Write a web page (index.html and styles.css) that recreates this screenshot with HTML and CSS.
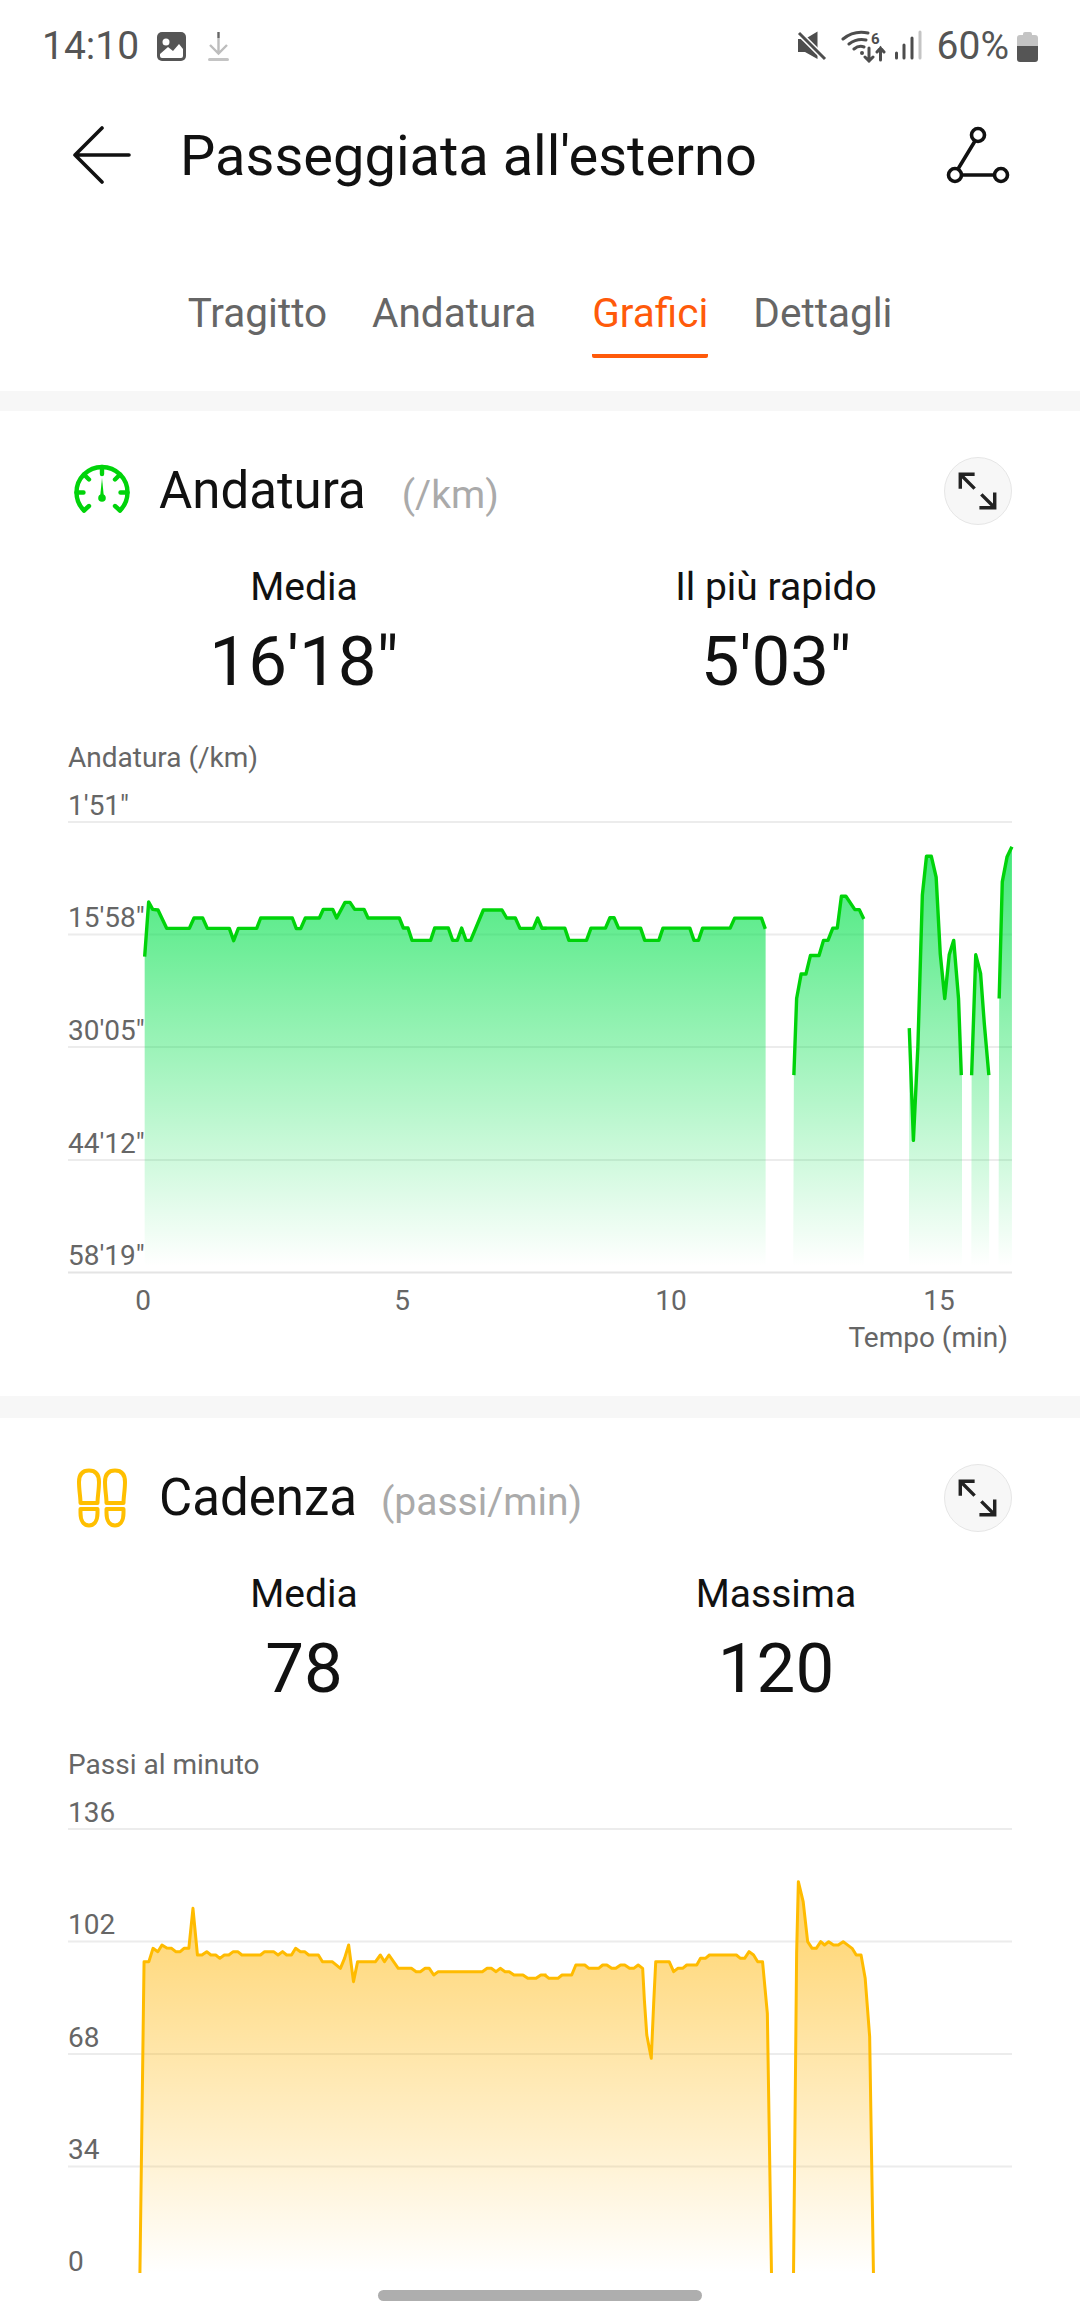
FILE: index.html
```html
<!DOCTYPE html>
<html lang="it">
<head>
<meta charset="utf-8">
<title>Passeggiata all'esterno</title>
<link rel="stylesheet" href="styles.css">
</head>
<body>
<div class="screen">
  <div class="status">
    <div class="status-side">
      <span class="status-text">14:10</span>
      <svg class="ic-pic" viewBox="0 0 29 29"><rect width="29" height="29" rx="5" fill="#555"/><circle cx="9" cy="10" r="3.5" fill="#fff"/><path d="M3 22 11 15l5 4 6-7 4 5v7q0 2-2 2H5q-2 0-2-2Z" fill="#fff"/></svg>
      <svg class="ic-dl" viewBox="0 0 21 29"><path d="M10.5 6V21M2 13l8.5 8.5L19 13" fill="none" stroke="#bdbdbd" stroke-width="2.4"/><path d="M10.5 0V6" stroke="#666" stroke-width="2.4"/><rect y="26" width="21" height="3" rx="1.5" fill="#c4c4c4"/></svg>
    </div>
    <div class="status-side">
      <svg class="ic-sys" viewBox="0 0 125 34">
        <path d="M1 10H8L20.5 2.5V30L8 23H1Z" fill="#4d4d4d"/>
        <path d="M2 4 28 30" stroke="#fff" stroke-width="6"/>
        <path d="M2 4 28 30" stroke="#4d4d4d" stroke-width="3"/>
        <g fill="none" stroke="#4d4d4d" stroke-width="3" stroke-linecap="round">
          <path d="M46 10Q57 1 71 4M52 15Q60 9 69 11M57 20Q62 16 67 18"/>
          <path d="M72 19V32M68 28l4 4 4-4M83.5 31V19M80 23l3.500-4 3.500 4"/>
          <path d="M99.500 24V29M107 16V29M115 9V29"/>
          <path d="M123 3V29" stroke="#c4c4c4"/>
        </g>
        <circle cx="65" cy="24" r="2" fill="#4d4d4d"/>
        <text class="wifi-six" x="74" y="15">6</text>
      </svg>
      <span class="status-text status-pct">60%</span>
      <svg class="ic-bat" viewBox="0 0 21 31"><path d="M6 3q0-2 2-2h5q2 0 2 2v1h3q3 0 3 3v8H0V7q0-3 3-3h3Z" fill="#c4c4c4"/><path d="M0 15h21v13q0 3-3 3H3q-3 0-3-3Z" fill="#555"/></svg>
    </div>
  </div>

  <header class="appbar">
    <svg class="ic-back" viewBox="0 0 60 60"><path d="M30 2 3 29 30 56M3 29H57" fill="none" stroke="#111" stroke-width="3.600" stroke-linecap="round" stroke-linejoin="round"/></svg>
    <h1 class="page-title">Passeggiata all'esterno</h1>
    <svg class="ic-route" viewBox="0 0 64 60"><g fill="none" stroke="#111" stroke-width="3.600"><circle cx="32" cy="9" r="6.500"/><circle cx="9" cy="49" r="6.500"/><circle cx="55" cy="49" r="6.500"/><path d="M29 15 12 43M16 49H48"/></g></svg>
  </header>

  <nav class="tabs">
    <span class="tab">Tragitto</span>
    <span class="tab">Andatura</span>
    <span class="tab tab-active">Grafici</span>
    <span class="tab">Dettagli</span>
  </nav>

  <div class="band"></div>

  <section class="card">
    <div class="card-head">
      <svg class="ic-head" viewBox="0 0 60 60"><g fill="none" stroke="#00d30a" stroke-width="4.400" stroke-linecap="round"><path d="M12 49.500A25.500 25.500 0 1 1 48 49.500"/><path d="M30 6V13M12 13.500 17 18.500M48 13.500 43 18.500M4.500 31.500H11.500M48.500 31.500H55.500M12 49.500 17 45M48 49.500 43 45"/></g><path d="M30 17 31.800 35H28.200Z" fill="#00d30a"/><circle cx="30" cy="37" r="3.800" fill="#00d30a"/></svg>
      <div class="head-text">
        <span class="head-title">Andatura</span>
        <span class="head-unit unit-wide">(/km)</span>
      </div>
      <button class="expand" type="button" aria-label="Espandi"><svg viewBox="0 0 68 68"><path d="M16 31V16H31M16 16 31 31M36 51H52V35M52 51 38 37" fill="none" stroke="#222" stroke-width="3.600"/></svg></button>
    </div>
    <div class="stats">
      <div class="stat"><div class="stat-label">Media</div><div class="stat-value">16'18"</div></div>
      <div class="stat"><div class="stat-label">Il più rapido</div><div class="stat-value">5'03"</div></div>
    </div>
    <div class="caption">Andatura (/km)</div>
    <svg class="chart chart-pace" viewBox="0 780 1080 616">
      <defs>
        <linearGradient id="paceFill" gradientUnits="userSpaceOnUse" x1="0" y1="850" x2="0" y2="1266">
          <stop offset="0" stop-color="#00e04a" stop-opacity=".74"/>
          <stop offset="1" stop-color="#00e04a" stop-opacity="0"/>
        </linearGradient>
        <clipPath id="paceClip">
          <polygon transform="translate(60 780) scale(.33333)" points="254,1458 254,530 266,366 278,388 294,390 320,445 388,445 402,414 428,414 442,445 508,445 521,482 535,445 590,445 602,414 697,414 709,446 722,446 736,414 778,414 790,388 818,388 830,414 855,367 870,367 884,388 912,388 924,414 1018,414 1030,444 1044,444 1056,481 1112,481 1124,444 1165,444 1178,481 1192,481 1205,444 1218,481 1232,481 1270,390 1326,390 1340,414 1366,414 1380,445 1420,445 1433,414 1446,445 1460,445 1460,1458"/>
          <polygon transform="translate(540 780) scale(.34447 .37037)" points="0,1310 0,400 8,400 72,400 84,433 135,433 148,400 190,400 203,372 215,372 228,400 292,400 304,433 345,433 357,400 435,400 447,433 460,433 472,400 552,400 565,373 643,373 655,402 655,1310"/>
          <polygon transform="translate(540 780) scale(.34447 .37037)" points="735,1310 737,797 745,590 758,524 772,524 785,474 810,474 823,433 836,433 850,400 863,400 875,314 888,314 914,350 927,350 940,375 940,1310"/>
          <polygon transform="translate(540 780) scale(.34447 .37037)" points="1071,1310 1072,670 1084,973 1097,720 1110,310 1122,206 1136,206 1150,262 1162,470 1175,590 1188,472 1201,433 1215,590 1225,797 1225,1310"/>
          <polygon transform="translate(540 780) scale(.34447 .37037)" points="1252,1310 1253,797 1265,472 1279,522 1290,660 1304,797 1304,1310"/>
          <polygon transform="translate(540 780) scale(.34447 .37037)" points="1331,1310 1333,590 1342,275 1356,207 1370,180 1370,1310"/>
        </clipPath>
      </defs>
      <path class="grid" d="M68 822H1012M68 934.500H1012M68 1047H1012M68 1160H1012"/>
      <path class="grid-base" d="M68 1272.500H1012"/>
      <rect x="140" y="840" width="872" height="430" fill="url(#paceFill)" clip-path="url(#paceClip)"/>
      <g class="line-pace">
        <polyline transform="translate(60 780) scale(.33333)" points="254,530 266,366 278,388 294,390 320,445 388,445 402,414 428,414 442,445 508,445 521,482 535,445 590,445 602,414 697,414 709,446 722,446 736,414 778,414 790,388 818,388 830,414 855,367 870,367 884,388 912,388 924,414 1018,414 1030,444 1044,444 1056,481 1112,481 1124,444 1165,444 1178,481 1192,481 1205,444 1218,481 1232,481 1270,390 1326,390 1340,414 1366,414 1380,445 1420,445 1433,414 1446,445 1460,445"/>
        <g transform="translate(540 780) scale(.34447 .37037)">
          <polyline points="8,400 72,400 84,433 135,433 148,400 190,400 203,372 215,372 228,400 292,400 304,433 345,433 357,400 435,400 447,433 460,433 472,400 552,400 565,373 643,373 654,402"/>
          <polyline points="737,797 745,590 758,524 772,524 785,474 810,474 823,433 836,433 850,400 863,400 875,314 888,314 914,350 927,350 940,375"/>
          <polyline points="1072,670 1084,973 1097,720 1110,310 1122,206 1136,206 1150,262 1162,470 1175,590 1188,472 1201,433 1215,590 1223,797"/>
          <polyline points="1253,797 1265,472 1279,522 1290,660 1303,797"/>
          <polyline points="1333,590 1342,275 1356,207 1370,180"/>
        </g>
      </g>
      <g class="axis">
        <text x="68" y="815">1'51"</text>
        <text x="68" y="927">15'58"</text>
        <text x="68" y="1040">30'05"</text>
        <text x="68" y="1153">44'12"</text>
        <text x="68" y="1265">58'19"</text>
        <text class="mid" x="143" y="1310">0</text>
        <text class="mid" x="402" y="1310">5</text>
        <text class="mid" x="671" y="1310">10</text>
        <text class="mid" x="939" y="1310">15</text>
        <text class="end" x="1008" y="1347">Tempo (min)</text>
      </g>
    </svg>
  </section>

  <div class="band band-lg"></div>

  <section class="card">
    <div class="card-head">
      <svg class="ic-head" viewBox="0 0 60 60"><g fill="none" stroke="#ffbf00" stroke-width="4" stroke-linejoin="round"><path d="M8.500 35C8.500 29 7 22 7 14 7 6 11 2.500 17 2.500S27 6 27 14C27 22 25.500 29 25.500 35ZM8.500 41H25.500V45C25.500 53 22 57.500 17 57.500S8.500 53 8.500 45Z"/><path d="M34.500 35C34.500 29 33 22 33 14 33 6 37 2.500 43 2.500S53 6 53 14C53 22 51.500 29 51.500 35ZM34.500 41H51.500V45C51.500 53 48 57.500 43 57.500S34.500 53 34.500 45Z"/></g></svg>
      <div class="head-text">
        <span class="head-title">Cadenza</span>
        <span class="head-unit">(passi/min)</span>
      </div>
      <button class="expand" type="button" aria-label="Espandi"><svg viewBox="0 0 68 68"><path d="M16 31V16H31M16 16 31 31M36 51H52V35M52 51 38 37" fill="none" stroke="#222" stroke-width="3.600"/></svg></button>
    </div>
    <div class="stats">
      <div class="stat"><div class="stat-label">Media</div><div class="stat-value">78</div></div>
      <div class="stat"><div class="stat-label">Massima</div><div class="stat-value">120</div></div>
    </div>
    <div class="caption">Passi al minuto</div>
    <svg class="chart chart-cadence" viewBox="0 1787 1080 529">
      <defs>
        <linearGradient id="cadFill" gradientUnits="userSpaceOnUse" x1="0" y1="1880" x2="0" y2="2273">
          <stop offset="0" stop-color="#ffb400" stop-opacity=".6"/>
          <stop offset="1" stop-color="#ffb400" stop-opacity="0"/>
        </linearGradient>
        <clipPath id="cadClip">
          <polygon transform="translate(60 1860) scale(.34447 .33333)" points="232,1240 244,305 258,305 270,265 284,275 296,255 310,264 324,265 336,275 349,275 360,265 374,265 386,145 399,285 412,285 426,275 438,285 452,285 464,295 477,285 490,285 503,275 516,275 528,285 582,285 594,275 620,275 633,285 646,275 658,285 672,285 684,265 698,275 710,275 722,285 750,285 762,305 790,305 814,325 826,295 838,255 852,365 864,305 916,305 930,285 942,305 955,285 982,325 1020,325 1034,335 1046,335 1060,325 1072,325 1085,345 1098,335 1226,335 1240,325 1252,325 1266,335 1278,325 1292,335 1304,335 1318,345 1344,345 1358,355 1382,355 1396,345 1412,345 1412,1240"/>
          <polygon transform="translate(540 1860) scale(.34447 .33333)" points="10,1240 10,345 14,345 26,355 52,355 64,345 92,345 104,315 130,315 142,325 170,325 182,315 194,315 208,325 220,325 234,315 246,315 260,325 272,325 285,315 298,325 303,420 310,525 323,595 330,430 336,305 375,305 388,335 400,325 414,325 426,315 455,315 466,295 480,295 492,285 570,285 582,295 594,295 607,275 620,285 632,305 646,305 660,460 672,1240"/>
          <polygon transform="translate(540 1860) scale(.34447 .33333)" points="736,1240 745,280 750,65 764,125 777,245 790,265 802,265 815,245 826,255 838,245 852,255 866,255 880,245 906,265 918,285 932,285 944,355 957,530 968,1240"/>
        </clipPath>
        <clipPath id="cadLineClip"><rect x="0" y="1787" width="1080" height="486"/></clipPath>
      </defs>
      <path class="grid" d="M68 1829H1012M68 1941.500H1012M68 2054H1012M68 2166.500H1012"/>
      <rect x="130" y="1870" width="882" height="403" fill="url(#cadFill)" clip-path="url(#cadClip)"/>
      <g class="line-cadence" clip-path="url(#cadLineClip)">
        <polyline transform="translate(60 1860) scale(.34447 .33333)" points="232,1240 244,305 258,305 270,265 284,275 296,255 310,264 324,265 336,275 349,275 360,265 374,265 386,145 399,285 412,285 426,275 438,285 452,285 464,295 477,285 490,285 503,275 516,275 528,285 582,285 594,275 620,275 633,285 646,275 658,285 672,285 684,265 698,275 710,275 722,285 750,285 762,305 790,305 814,325 826,295 838,255 852,365 864,305 916,305 930,285 942,305 955,285 982,325 1020,325 1034,335 1046,335 1060,325 1072,325 1085,345 1098,335 1226,335 1240,325 1252,325 1266,335 1278,325 1292,335 1304,335 1318,345 1344,345 1358,355 1382,355 1396,345 1412,345"/>
        <g transform="translate(540 1860) scale(.34447 .33333)">
          <polyline points="14,345 26,355 52,355 64,345 92,345 104,315 130,315 142,325 170,325 182,315 194,315 208,325 220,325 234,315 246,315 260,325 272,325 285,315 298,325 303,420 310,525 323,595 330,430 336,305 375,305 388,335 400,325 414,325 426,315 455,315 466,295 480,295 492,285 570,285 582,295 594,295 607,275 620,285 632,305 646,305 660,460 672,1240"/>
          <polyline points="736,1240 745,280 750,65 764,125 777,245 790,265 802,265 815,245 826,255 838,245 852,255 866,255 880,245 906,265 918,285 932,285 944,355 957,530 968,1240"/>
        </g>
      </g>
      <g class="axis">
        <text x="68" y="1822">136</text>
        <text x="68" y="1934">102</text>
        <text x="68" y="2047">68</text>
        <text x="68" y="2159">34</text>
        <text x="68" y="2271">0</text>
      </g>
    </svg>
  </section>

  <div class="home-bar"></div>
</div>
</body>
</html>
```
FILE: styles.css
```css
* { box-sizing: border-box; }
html, body { margin: 0; padding: 0; background: #fff; }
body { font-family: Roboto, "Noto Sans", sans-serif; color: #111; }
.screen { position: relative; width: 1080px; height: 2316px; overflow: hidden; background: #fff; }

.status { display: flex; justify-content: space-between; align-items: center; height: 92px; padding: 0 42px; }
.status-side { display: flex; align-items: center; }
.status-text { font-size: 39px; line-height: 44px; color: #555; }
.status-pct { margin-left: 15px; margin-right: 8px; }
.ic-pic { width: 29px; height: 29px; margin-left: 18px; }
.ic-dl { width: 21px; height: 29px; margin-left: 22px; }
.ic-sys { width: 125px; height: 34px; }
.ic-bat { width: 21px; height: 31px; }
.wifi-six { font-size: 15px; font-weight: 700; fill: #4d4d4d; }

.appbar { display: flex; align-items: center; height: 88px; margin-top: 20px; padding: 0 70px 0 72px; }
.ic-back { width: 60px; height: 60px; flex: none; }
.page-title { flex: 1; margin: 0 0 0 48px; font-size: 56px; font-weight: 400; line-height: 88px; color: #111; }
.ic-route { width: 64px; height: 60px; flex: none; }

.tabs { display: flex; justify-content: center; gap: 45px; height: 191px; padding-top: 88px; }
.tab { font-size: 40.5px; line-height: 50px; color: #666; }
.tab:nth-child(3) { margin-left: 11px; }
.tab-active { height: 70px; color: #ff5a0a; border-bottom: 4px solid #ff5a0a; border-radius: 0 0 2px 2px; }

.band { height: 20px; background: #f7f7f7; }
.band-lg { height: 22px; }

.card { background: #fff; padding-top: 46px; }
.card-head { display: flex; align-items: center; height: 68px; padding: 0 68px 0 72px; }
.ic-head { width: 60px; height: 60px; flex: none; }
.head-text { flex: 1; display: flex; align-items: baseline; margin-left: 27px; }
.head-title { font-size: 51px; line-height: 68px; color: #111; }
.head-unit { margin-left: 24px; font-size: 39px; color: #aaa; }
.unit-wide { margin-left: 36px; }
.expand { flex: none; width: 68px; height: 68px; padding: 0; border: 1.5px solid #e6e6e6; border-radius: 50%; background: #f7f7f7; }
.expand svg { display: block; width: 65px; height: 65px; }

.stats { display: grid; grid-template-columns: 1fr 1fr; margin-top: 40px; padding: 0 68px; text-align: center; }
.stat-label { font-size: 39px; line-height: 44px; color: #111; }
.stat-value { margin-top: 13px; font-size: 69px; line-height: 80px; color: #111; }

.caption { margin-top: 38px; padding-left: 68px; font-size: 28px; line-height: 36px; color: #666; }

.chart { display: block; width: 1080px; margin-top: 4px; }
.chart-pace { height: 616px; }
.chart-cadence { height: 529px; }
.grid { fill: none; stroke: #ececec; stroke-width: 2; }
.grid-base { fill: none; stroke: #e4e4e4; stroke-width: 2; }
.line-pace { fill: none; stroke: #00d30a; stroke-linejoin: round; }
.line-pace polyline { stroke-width: 3.4; vector-effect: non-scaling-stroke; }
.line-cadence { fill: none; stroke: #ffbb00; stroke-linejoin: round; }
.line-cadence polyline { stroke-width: 3; vector-effect: non-scaling-stroke; }
.axis text { font-size: 28px; fill: #666; }
.axis .mid { text-anchor: middle; }
.axis .end { text-anchor: end; }

.home-bar { position: absolute; left: 378px; top: 2290px; width: 324px; height: 11px; border-radius: 6px; background: #aeaeae; }
```
